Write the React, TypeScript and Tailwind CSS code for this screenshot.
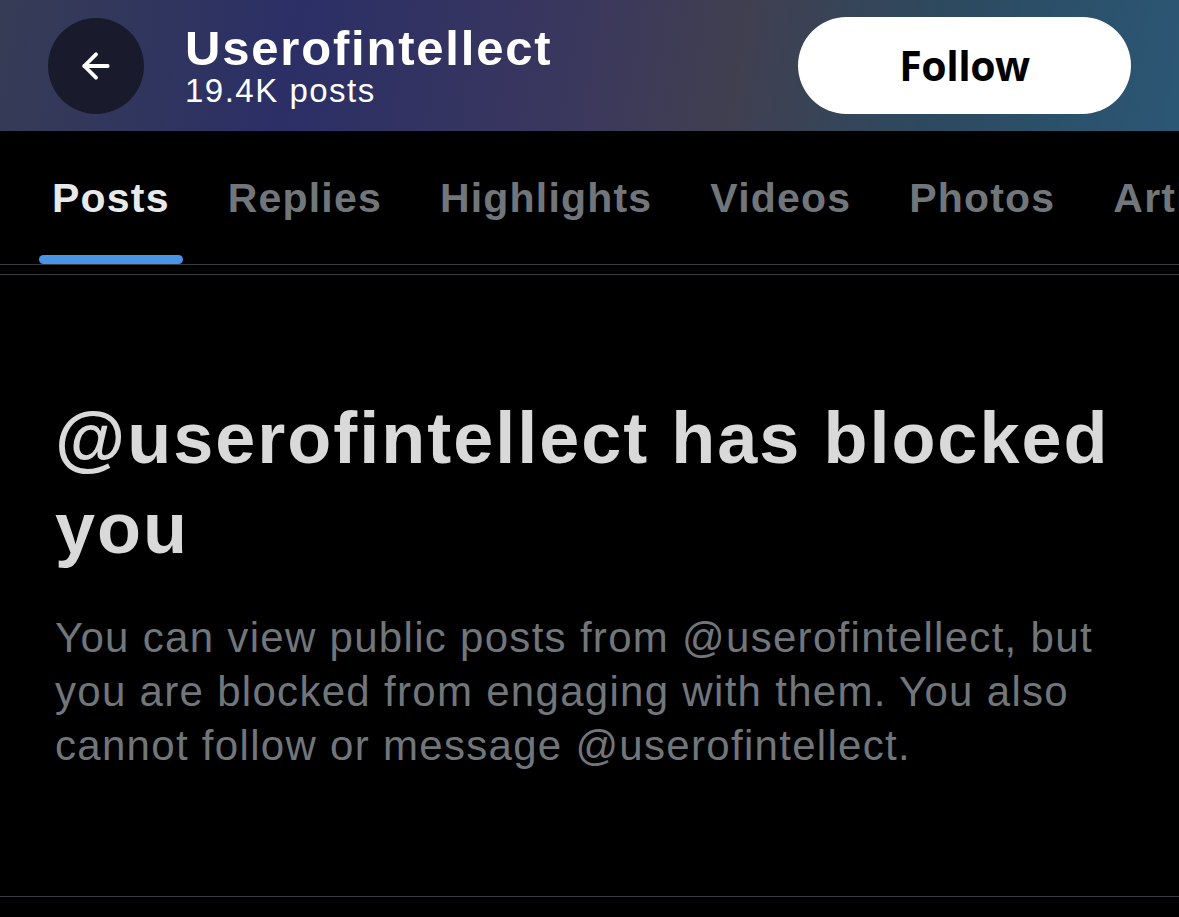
import { ArrowLeft } from 'lucide-react'

const tabs = ['Posts', 'Replies', 'Highlights', 'Videos', 'Photos', 'Articles']

export default function App() {
  return (
    <div className="w-[1179px] h-[917px] overflow-hidden bg-black font-['Liberation_Sans',sans-serif]">
      {/* Header with banner gradient */}
      <div className="h-[131px] flex items-center pl-[48px] pr-[48px] bg-[linear-gradient(100deg,#363c55_0%,#2b2f66_25%,#3a375e_48%,#403f50_62%,#2c4a60_80%,#2b5775_100%)]">
        <button className="w-[96px] h-[96px] rounded-full bg-[#191a2c] flex items-center justify-center text-white">
          <ArrowLeft className="w-[40px] h-[40px]" strokeWidth={2.3} />
        </button>
        <div className="ml-[41px] flex flex-col">
          <span className="text-white font-bold text-[49px] leading-[50px] tracking-[1.8px]">Userofintellect</span>
          <span className="text-white text-[33px] leading-[36px] tracking-[1.5px]">19.4K posts</span>
        </div>
        <button className="ml-auto w-[333px] h-[97px] rounded-full bg-white text-black font-bold text-[41px] font-['Open_Sans',sans-serif] tracking-[-0.5px]">
          Follow
        </button>
      </div>

      {/* Tabs */}
      <div className="h-[134px] flex items-end border-b border-[#3a3b3e] whitespace-nowrap">
        {tabs.map((t, i) => (
          <div key={t} className={`flex flex-col items-center ${i === 0 ? 'ml-[39px]' : 'ml-[32px]'}`}>
            <span
              className={`px-[13px] text-[41px] leading-[48px] font-bold tracking-[1.2px] ${
                i === 0 ? 'text-[#e7e9ea]' : 'text-[#71767b]'
              }`}
            >
              {t}
            </span>
            <div className={`mt-[33px] h-[9px] w-full rounded-full ${i === 0 ? 'bg-[#4a94e6]' : 'bg-transparent'}`} />
          </div>
        ))}
      </div>

      <div className="h-[9px]" />

      {/* Blocked message */}
      <div className="border-t border-b border-[#3a3b3e] pl-[55px] pr-[40px] pt-[118px] h-[623px]">
        <h1 className="text-[#d9d9d9] font-bold text-[72px] leading-[90px] tracking-[2px]">
          @userofintellect has blocked you
        </h1>
        <p className="mt-[38px] text-[#71767b] text-[42px] leading-[54px] tracking-[1.3px] pr-[20px]">
          You can view public posts from @userofintellect, but you are blocked from engaging with them. You also
          cannot follow or message @userofintellect.
        </p>
      </div>
    </div>
  )
}
